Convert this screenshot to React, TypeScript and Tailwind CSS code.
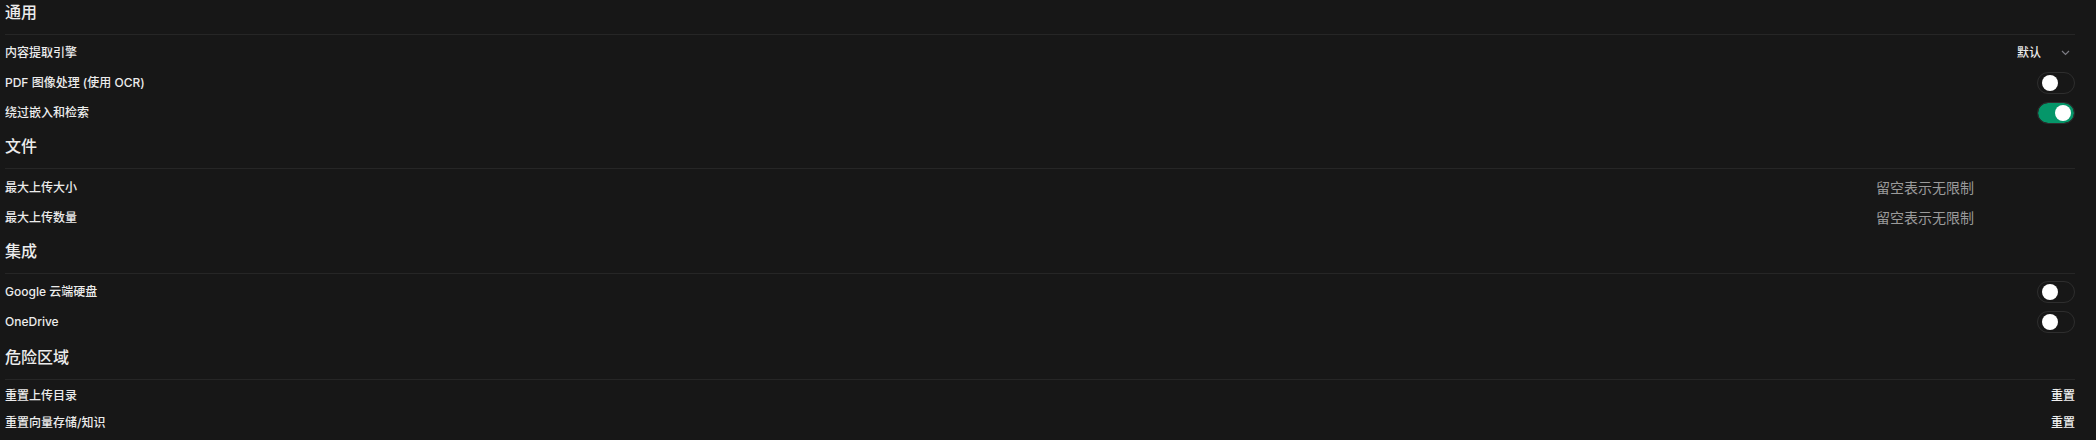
import { ReactNode } from "react";

function Toggle({ on }: { on?: boolean }) {
  return (
    <div
      className={
        "mx-[1px] flex h-5 w-9 shrink-0 items-center rounded-full px-[3px] outline outline-1 outline-[#2e2e2e] " +
        (on ? "bg-[#059669]" : "bg-transparent")
      }
    >
      <span
        className={
          "block size-4 rounded-full bg-white " +
          (on ? "translate-x-[14px]" : "translate-x-[1px]")
        }
      />
    </div>
  );
}

function Section({
  title,
  pad,
  children,
}: {
  title: string;
  pad: string;
  children: ReactNode;
}) {
  return (
    <section>
      <div className="h-6 text-base font-medium leading-6 text-[#ececec]">{title}</div>
      <hr className="mt-[10px] border-[#262626]" />
      <div className={pad}>{children}</div>
    </section>
  );
}

function Row({ label, h = "h-[30px]", children }: { label: string; h?: string; children?: ReactNode }) {
  return (
    <div className={"flex w-full items-center justify-between " + h}>
      <div className="text-xs font-medium text-[#ececec]">{label}</div>
      {children}
    </div>
  );
}

function Limit() {
  return <div className="w-[199px] text-sm text-[#9b9b9b]">留空表示无限制</div>;
}

function ResetBtn() {
  return <button className="text-xs font-medium text-[#f0f0f0]">重置</button>;
}

export default function App() {
  return (
    <div className="h-screen w-full bg-[#171717] pl-[5px] pr-[21px] font-['Inter','Noto_Sans_CJK_SC',sans-serif]">
      <Section title="通用" pad="pt-[3px] mb-[6px]">
        <Row label="内容提取引擎">
          <div className="flex items-center gap-[20px] pr-[5px]">
            <span className="text-xs font-medium text-[#ececec]">默认</span>
            <svg width="9" height="6" viewBox="0 0 9 6" fill="none" className="text-[#7c7c84]">
              <path d="M1 1l3.5 3.5L8 1" stroke="currentColor" strokeWidth="1.2" />
            </svg>
          </div>
        </Row>
        <Row label="PDF 图像处理 (使用 OCR)">
          <Toggle />
        </Row>
        <Row label="绕过嵌入和检索">
          <Toggle on />
        </Row>
      </Section>

      <Section title="文件" pad="pt-[4px] mb-[7px]">
        <Row label="最大上传大小">
          <Limit />
        </Row>
        <Row label="最大上传数量" h="h-[29px]">
          <Limit />
        </Row>
      </Section>

      <Section title="集成" pad="pt-[3px] mb-[8px]">
        <Row label="Google 云端硬盘">
          <Toggle />
        </Row>
        <Row label="OneDrive">
          <Toggle />
        </Row>
      </Section>

      <Section title="危险区域" pad="pt-[2px]">
        <Row label="重置上传目录" h="h-[27px]">
          <ResetBtn />
        </Row>
        <Row label="重置向量存储/知识" h="h-[27px]">
          <ResetBtn />
        </Row>
      </Section>
    </div>
  );
}
